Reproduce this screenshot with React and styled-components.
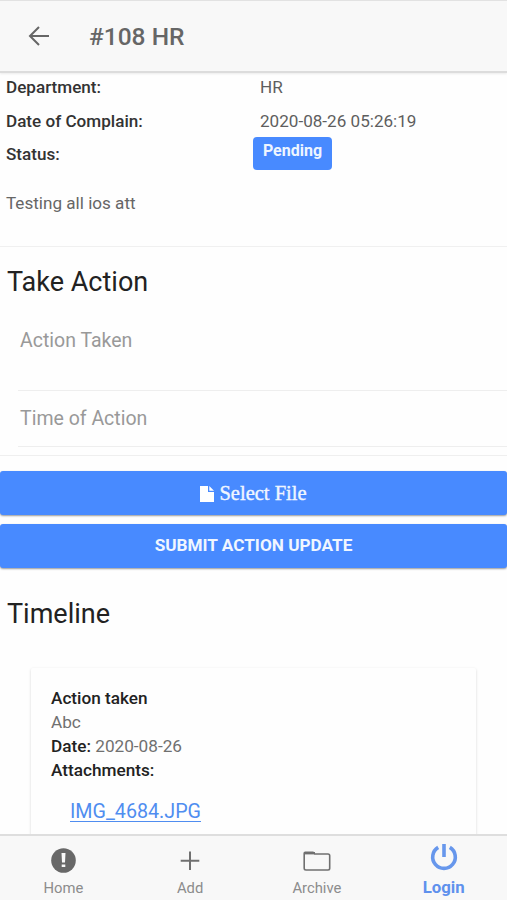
import React from "react";
import styled, { createGlobalStyle } from "styled-components";

const details = [
  { label: "Department:", value: "HR" },
  { label: "Date of Complain:", value: "2020-08-26 05:26:19" },
];

const App = () => {
  return (
    <Screen>
      <GlobalStyle />
      <Header>
        <BackIcon viewBox="0 0 22 22">
          <path d="M21 11H2M11 2L2 11L11 20" />
        </BackIcon>
        <HeaderTitle>#108 HR</HeaderTitle>
      </Header>
      <Content>
        <Details>
          {details.map(({ label, value }) => (
            <DetailRow key={label}>
              <Label>{label}</Label>
              <Value>{value}</Value>
            </DetailRow>
          ))}
          <DetailRow>
            <Label>Status:</Label>
            <Badge>Pending</Badge>
          </DetailRow>
          <Description>Testing all ios att</Description>
        </Details>
        <Form>
          <Heading>Take Action</Heading>
          <Fields>
            <Field $height={75}>Action Taken</Field>
            <Field $height={56}>Time of Action</Field>
          </Fields>
        </Form>
        <Buttons>
          <FileButton>
            <FileIcon viewBox="0 0 14 16">
              <path d="M0 0H8V6H14V16H0ZM9.3 0L14 4.8H9.3Z" />
            </FileIcon>
            Select File
          </FileButton>
          <SubmitButton>Submit Action Update</SubmitButton>
        </Buttons>
        <TimelineHeading>Timeline</TimelineHeading>
        <Card>
          <CardLine><Strong>Action taken</Strong></CardLine>
          <CardLine>Abc</CardLine>
          <CardLine><Strong>Date:</Strong> 2020-08-26</CardLine>
          <CardLine><Strong>Attachments:</Strong></CardLine>
          <Attachment href="#">IMG_4684.JPG</Attachment>
        </Card>
      </Content>
      <TabBar>
        <Tab>
          <TabIcon viewBox="0 0 28 28">
            <circle cx="14.5" cy="13.5" r="12.3" fill="#686868" stroke="none" />
            <path d="M12.5 6H16.5L16 15.5H13ZM12.7 17.5H16.3V20H12.7Z" fill="#f8f8f8" stroke="none" />
          </TabIcon>
          <TabLabel>Home</TabLabel>
        </Tab>
        <Tab>
          <TabIcon viewBox="0 0 28 28">
            <path d="M14 4.5V23M4.7 13.8H23.3" />
          </TabIcon>
          <TabLabel>Add</TabLabel>
        </Tab>
        <Tab>
          <TabIcon viewBox="0 0 28 28">
            <path d="M1.2 6.2Q1.2 5.2 2.2 5.2H10L12 7H25Q26.7 7 26.7 8.7V21.3Q26.7 23 25 23H3Q1.2 23 1.2 21.3Z" strokeWidth="1.6" />
            <path d="M1.5 6.2H12" strokeWidth="2.4" />
          </TabIcon>
          <TabLabel>Archive</TabLabel>
        </Tab>
        <Tab $active>
          <TabIcon $active viewBox="0 0 28 28">
            <path d="M8.2 4.4A11.3 11.3 0 1 0 19.8 4.4M14 1V14" strokeWidth="3.6" />
          </TabIcon>
          <TabLabel $active>Login</TabLabel>
        </Tab>
      </TabBar>
    </Screen>
  );
};

export default App;

const GlobalStyle = createGlobalStyle`
  * {
    box-sizing: border-box;
  }

  body {
    margin: 0;
    background: #fefefe;
    font-family: Roboto, sans-serif;
  }
`;

const Screen = styled.div`
  display: flex;
  flex-direction: column;
  height: 900px;
  overflow: hidden;
  background: #fefefe;
`;

const Header = styled.header`
  display: flex;
  flex: none;
  align-items: center;
  height: 73px;
  padding-left: 28px;
  border-top: 1px solid #e2e2e2;
  border-bottom: 2px solid #dcdcdc;
  background: #f8f8f8;
  box-shadow: 0 1px 2px rgba(0, 0, 0, 0.08);
`;

const BackIcon = styled.svg`
  width: 22px;
  height: 22px;
  fill: none;
  stroke: #666;
  stroke-width: 2;
`;

const HeaderTitle = styled.h1`
  margin: 2px 0 0 39px;
  color: #666;
  font-size: 24.5px;
  font-weight: 500;
  line-height: 30px;
`;

const Content = styled.main`
  flex: 1;
  min-height: 0;
  overflow: hidden;
`;

const Details = styled.section`
  height: 174px;
  padding: 0 6px;
  border-bottom: 1px solid #f0f0f0;
`;

const DetailRow = styled.div`
  display: grid;
  grid-template-columns: 254px 1fr;
  height: 33.5px;
  font-size: 17.1px;
  line-height: 28px;
`;

const Label = styled.span`
  color: #333;
  font-weight: 500;
`;

const Value = styled.span`
  color: #5e5e5e;
`;

const Badge = styled.span`
  width: 79px;
  height: 33px;
  margin: -3px 0 0 -7px;
  border-radius: 4px;
  background: #488aff;
  color: #eef5ff;
  font-size: 16px;
  font-weight: 700;
  line-height: 27px;
  text-align: center;
`;

const Description = styled.p`
  margin: 15px 0 0;
  color: #666;
  font-size: 17.1px;
  line-height: 28px;
`;

const Form = styled.section`
  height: 209px;
  padding-top: 20px;
  border-bottom: 1px solid #efefef;
`;

const Heading = styled.h2`
  margin: 0 7px;
  color: #222;
  font-size: 27px;
  font-weight: 400;
  line-height: 30px;
`;

const Fields = styled.div`
  margin: 19px 0 0 18px;
`;

const Field = styled.div`
  height: ${({ $height }) => $height}px;
  padding: ${({ $height }) => ($height > 60 ? 13 : 16)}px 0 0 2px;
  border-bottom: 1px solid #eee;
  color: #999;
  font-size: 19.5px;
  line-height: 24px;
`;

const Buttons = styled.div`
  display: flex;
  flex-direction: column;
  gap: 9px;
  padding-top: 15px;
`;

const Button = styled.button`
  display: flex;
  align-items: center;
  justify-content: center;
  width: 100%;
  height: 44px;
  padding: 0;
  border: 0;
  border-radius: 3px;
  background: #488aff;
  box-shadow: 0 1px 2px rgba(0, 0, 0, 0.4);
  color: #f0f6ff;
`;

const FileButton = styled(Button)`
  gap: 5px;
  padding-top: 1px;
  font-family: "Liberation Serif", serif;
  font-size: 20.5px;
  -webkit-text-stroke: 0.4px #f0f6ff;
`;

const FileIcon = styled.svg`
  width: 14px;
  height: 16px;
  fill: #fff;
`;

const SubmitButton = styled(Button)`
  padding-bottom: 2px;
  font-family: Roboto, sans-serif;
  font-size: 17.2px;
  font-weight: 700;
  text-transform: uppercase;
`;

const TimelineHeading = styled(Heading)`
  margin-top: 31px;
`;

const Card = styled.article`
  width: 445px;
  height: 240px;
  margin: 39px 0 0 31px;
  padding: 18px 20px;
  border-radius: 2px;
  box-shadow: 0 1px 3px rgba(0, 0, 0, 0.16);
`;

const CardLine = styled.p`
  margin: 0;
  color: #707070;
  font-size: 17.2px;
  line-height: 24px;
`;

const Strong = styled.strong`
  color: #222;
  font-weight: 500;
`;

const Attachment = styled.a`
  display: block;
  margin: 17px 0 0 19px;
  color: #4f8df0;
  font-size: 19.7px;
  line-height: 26px;
  text-decoration-thickness: 1px;
  text-underline-offset: 3px;
`;

const TabBar = styled.nav`
  z-index: 1;
  display: grid;
  flex: none;
  grid-template-columns: repeat(4, 1fr);
  height: 66px;
  border-top: 2px solid #dedede;
  background: #f8f8f8;
`;

const Tab = styled.div`
  display: flex;
  flex-direction: column;
  align-items: center;
  padding-top: ${({ $active }) => ($active ? 7 : 11)}px;
  color: ${({ $active }) => ($active ? "#5f91ed" : "#8c8c8c")};
  font-size: ${({ $active }) => ($active ? 16.8 : 14.8)}px;
  font-weight: ${({ $active }) => ($active ? 700 : 400)};
`;

const TabIcon = styled.svg`
  width: 28px;
  height: 28px;
  fill: none;
  stroke: ${({ $active }) => ($active ? "#6797ec" : "#707070")};
  stroke-width: 2;
`;

const TabLabel = styled.span`
  margin-top: ${({ $active }) => ($active ? 6 : 3)}px;
  line-height: 20px;
`;
